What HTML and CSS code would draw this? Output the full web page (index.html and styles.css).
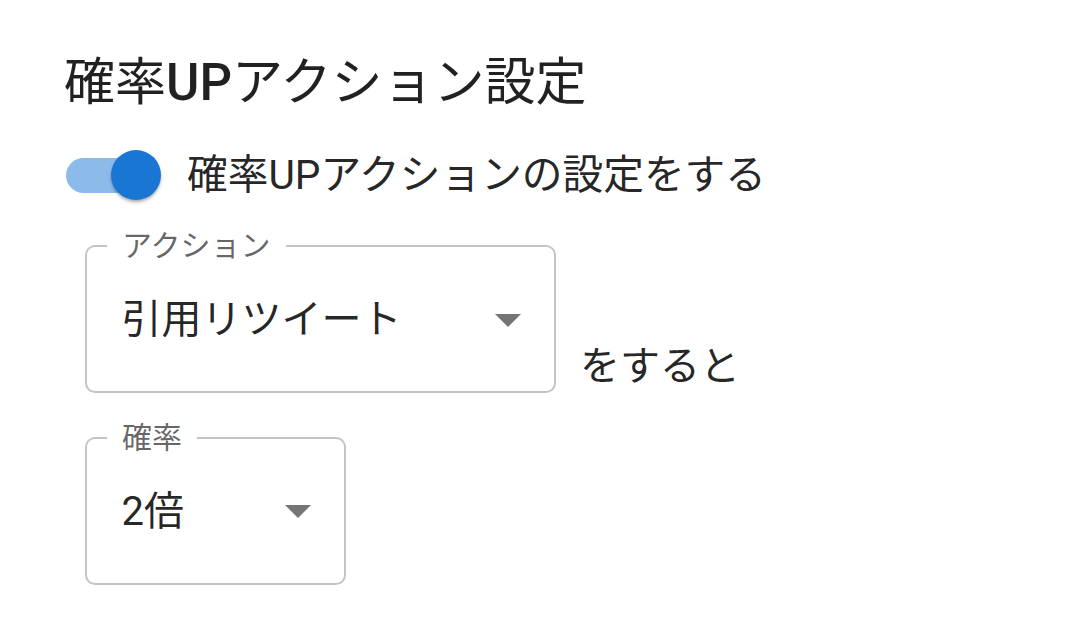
FILE: index.html
```html
<!DOCTYPE html>
<html lang="ja">
<head>
<meta charset="utf-8">
<title>確率UPアクション設定</title>
<link rel="stylesheet" href="styles.css">
</head>
<body>
<main class="page">
  <h1 class="title">確率<span class="latin">UP</span>アクション設定</h1>
  <div class="switch-row">
    <div class="switch">
      <div class="track"></div>
      <div class="thumb"></div>
    </div>
    <span class="switch-label">確率UPアクションの設定をする</span>
  </div>
  <div class="fields">
    <div class="action-row">
      <fieldset class="select select-wide">
        <legend>アクション</legend>
        <div class="value-row">
          <span class="value">引用リツイート</span>
          <svg class="arrow" width="26" height="13" viewBox="0 0 26 13"><path d="M0 0 L26 0 L13 13 Z" fill="#757575"/></svg>
        </div>
      </fieldset>
      <span class="suffix">をすると</span>
    </div>
    <fieldset class="select select-narrow">
      <legend>確率</legend>
      <div class="value-row">
        <span class="value">2倍</span>
        <svg class="arrow" width="26" height="13" viewBox="0 0 26 13"><path d="M0 0 L26 0 L13 13 Z" fill="#757575"/></svg>
      </div>
    </fieldset>
  </div>
</main>
</body>
</html>
```

FILE: styles.css
```css
* { box-sizing: border-box; }
html, body { margin: 0; background: #fff; }
body {
  font-family: Roboto, "Noto Sans CJK JP", sans-serif;
  color: rgba(0, 0, 0, 0.87);
}
.page {
  padding: 47px 0 0 64px;
}
.title {
  margin: 0;
  font-size: 51px;
  font-weight: 400;
  line-height: 72px;
}
.title .latin { font-weight: 500; }

.switch-row {
  display: flex;
  align-items: center;
  height: 60px;
  margin-top: 26px;
}
.switch {
  position: relative;
  width: 85px;
  height: 35px;
  margin-left: 2px;
  flex: none;
}
.track {
  width: 100%;
  height: 100%;
  border-radius: 17.5px;
  background: #8cbbea;
}
.thumb {
  position: absolute;
  left: 45px;
  top: -7.5px;
  width: 50px;
  height: 50px;
  border-radius: 50%;
  background: #1976d2;
  box-shadow: 0 2px 2px rgba(0,0,0,0.2), 0 3px 4px rgba(0,0,0,0.12);
}
.switch-label {
  margin-left: 36px;
  font-size: 40.7px;
  line-height: 60px;
}

.fields {
  margin-left: 21px;
  margin-top: 26px;
  display: flex;
  flex-direction: column;
  align-items: flex-start;
}
.action-row {
  display: flex;
  align-items: flex-end;
}
.select {
  margin: 0;
  padding: 0 32.5px 12px 20px;
  border: 2.5px solid #c4c4c4;
  border-radius: 10px;
  min-width: 0;
}
.select legend {
  padding: 0 15px;
  font-size: 30px;
  line-height: 30px;
  color: rgba(0, 0, 0, 0.6);
}
.select-wide { width: 471px; }
.select-narrow { width: 261px; margin-top: 29.5px; }
.value-row {
  height: 118px;
  display: flex;
  align-items: center;
  justify-content: space-between;
  padding-left: 14.5px;
}
.value {
  font-size: 40px;
  line-height: 60px;
}
.arrow { flex: none; margin-right: 1px; }
.suffix {
  margin-left: 24px;
  margin-bottom: -4px;
  font-size: 40px;
  line-height: 60px;
}
```
